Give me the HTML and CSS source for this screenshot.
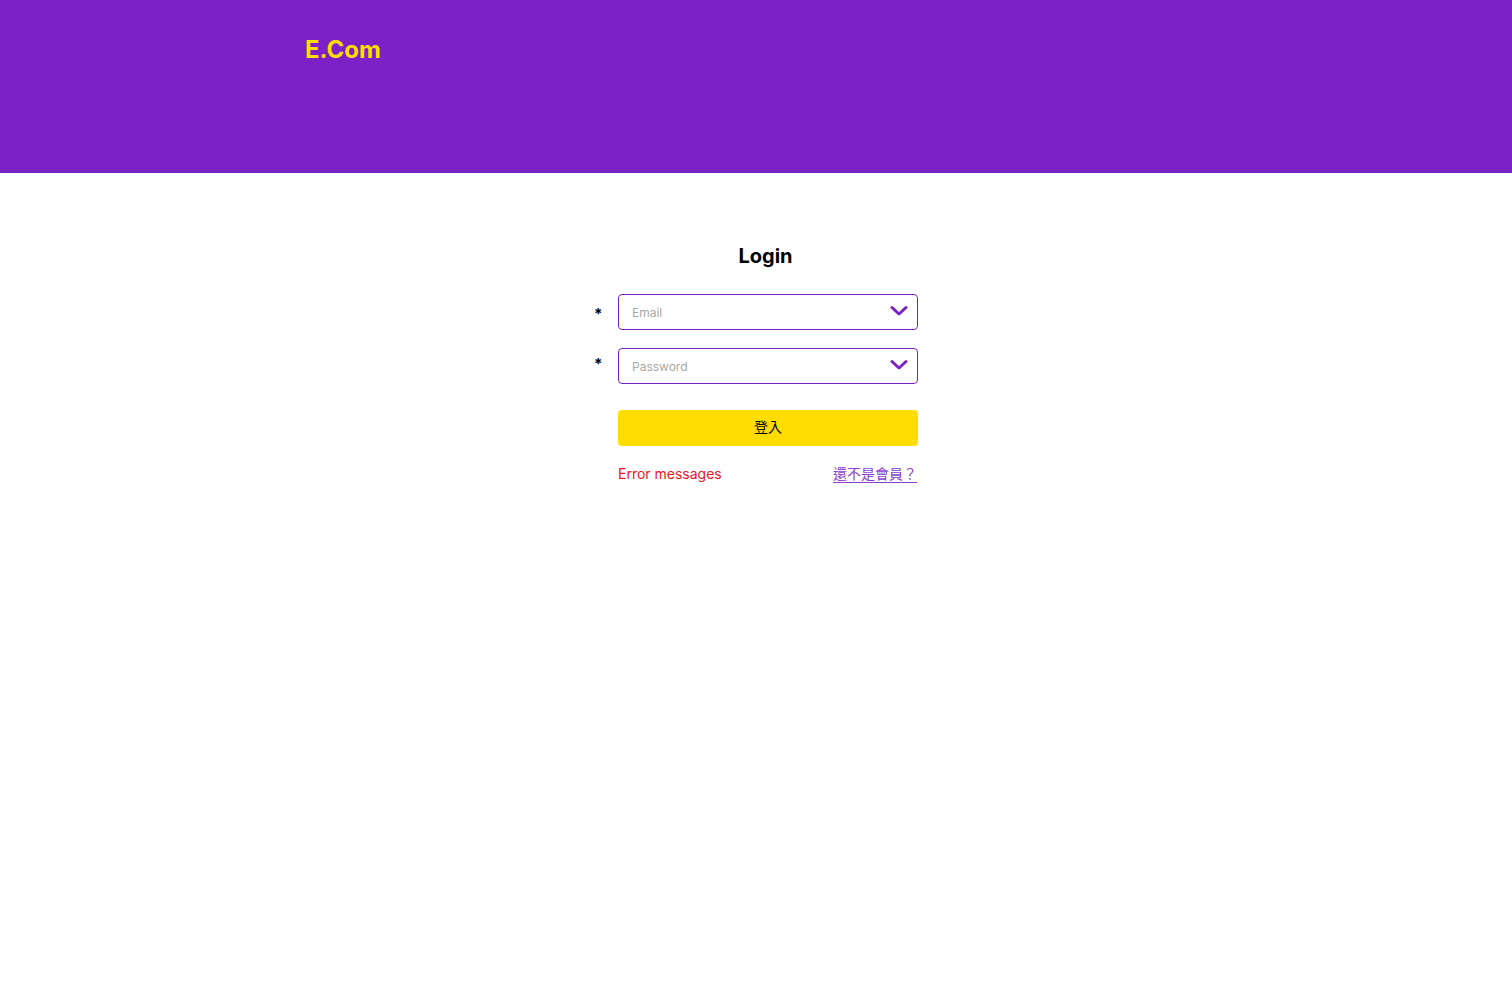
FILE: index.html
```html
<!DOCTYPE html>
<html lang="zh-Hant">
<head>
<meta charset="utf-8">
<title>E.Com Login</title>
<link rel="stylesheet" href="styles.css">
</head>
<body>
<header class="header">
  <div class="logo">E.Com</div>
</header>
<main class="main">
  <h1 class="title">Login</h1>
  <form class="form">
    <div class="row">
      <span class="req">*</span>
      <div class="field">
        <input class="input" type="email" placeholder="Email">
        <svg class="chev" width="18" height="12" viewBox="0 0 18 12"><path d="M2 2.5 L9 9 L16 2.5" fill="none" stroke="#7B21C6" stroke-width="3" stroke-linecap="round" stroke-linejoin="round"/></svg>
      </div>
    </div>
    <div class="row">
      <span class="req">*</span>
      <div class="field">
        <input class="input" type="password" placeholder="Password">
        <svg class="chev" width="18" height="12" viewBox="0 0 18 12"><path d="M2 2.5 L9 9 L16 2.5" fill="none" stroke="#7B21C6" stroke-width="3" stroke-linecap="round" stroke-linejoin="round"/></svg>
      </div>
    </div>
    <div class="row row-btn">
      <button class="btn" type="button">登入</button>
    </div>
    <div class="row row-foot">
      <div class="foot">
        <span class="error">Error messages</span>
        <a class="link" href="#">還不是會員？</a>
      </div>
    </div>
  </form>
</main>
</body>
</html>
```
FILE: styles.css
```css
* { box-sizing: border-box; }
html, body { margin: 0; padding: 0; }
body {
  font-family: Inter, "Noto Sans CJK TC", sans-serif;
  background: #fff;
  color: #000;
}
.header {
  height: 173px;
  background: #7B21C6;
  padding: 35px 0 0 305px;
}
.logo {
  color: #FFDD00;
  font-weight: 700;
  font-size: 24px;
  line-height: 29px;
}
.main {
  display: flex;
  flex-direction: column;
  align-items: center;
  padding-top: 70px;
  padding-left: 19px;
}
.title {
  margin: 0 0 25px 0;
  font-size: 20px;
  font-weight: 700;
  line-height: 26px;
}
.form {
  display: flex;
  flex-direction: column;
  width: 300px;
  margin-left: 5px;
}
.row {
  position: relative;
  margin-bottom: 18px;
}
.req {
  position: absolute;
  left: -24px;
  top: 10px;
  font-size: 15px;
  font-weight: 700;
  line-height: 20px;
}
.row:nth-child(2) .req { top: 6px; }
.field {
  position: relative;
  height: 36px;
}
.input {
  width: 100%;
  height: 36px;
  border: 1px solid #7B21C6;
  border-radius: 4px;
  padding: 0 40px 0 13px;
  font-family: Inter, sans-serif;
  font-size: 12px;
  color: #000;
  outline: none;
}
.input::placeholder { color: #A8A8A8; }
.chev {
  position: absolute;
  right: 10px;
  top: 11px;
}
.row-btn { margin-top: 8px; margin-bottom: 18px; }
.btn {
  width: 100%;
  height: 36px;
  border: none;
  border-radius: 4px;
  background: #FFDD00;
  font-family: "Noto Sans CJK TC", sans-serif;
  font-size: 14px;
  line-height: 20px;
  padding: 0 0 4px 0;
  color: #000;
  cursor: pointer;
}
.foot {
  display: flex;
  justify-content: space-between;
  align-items: flex-start;
  font-size: 14px;
  line-height: 20px;
}
.error { color: #F0141E; }
.link {
  color: #8A3FD0;
  text-decoration: underline;
  text-underline-offset: 3px;
  font-family: "Noto Sans CJK TC", sans-serif;
  line-height: 18px;
  margin-right: 1px;
}
```
